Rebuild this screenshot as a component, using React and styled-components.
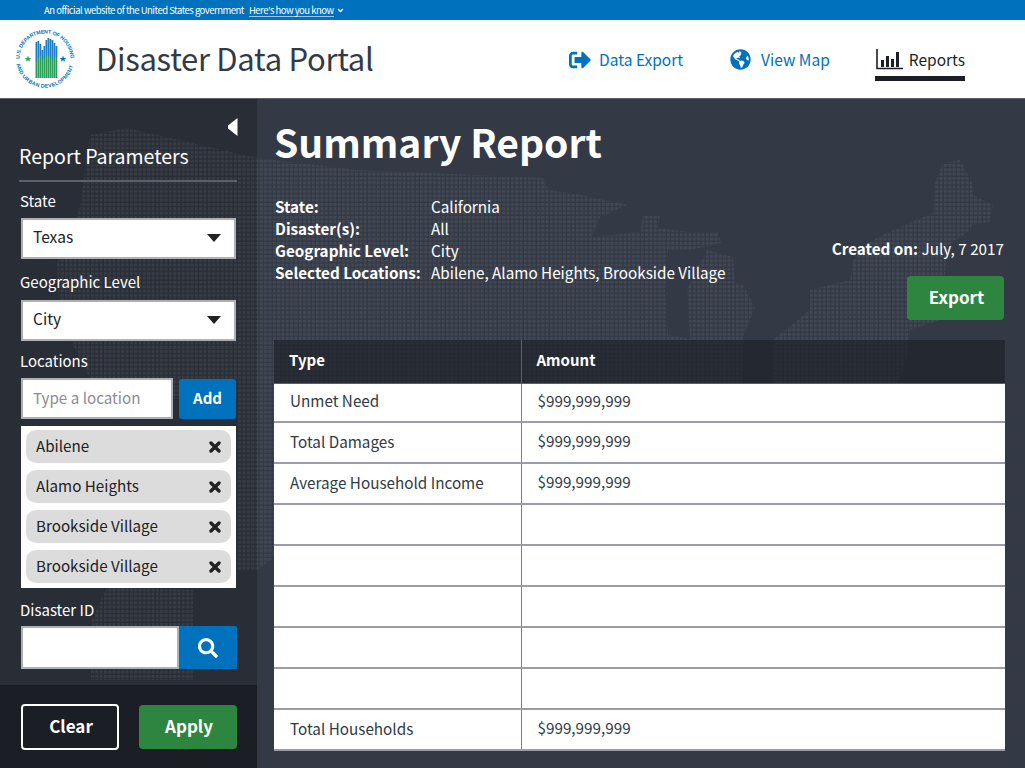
import React from 'react';
import styled, { createGlobalStyle } from 'styled-components';
import { FaAngleDown, FaGlobeAmericas, FaSearch, FaSignOutAlt } from 'react-icons/fa';

const GlobalStyle = createGlobalStyle`
  html, body {
    margin: 0;
    padding: 0;
    background: #333a46;
  }
  * {
    box-sizing: border-box;
  }
`;

const Page = styled.div`
  width: 1025px;
  height: 768px;
  display: flex;
  flex-direction: column;
  overflow: hidden;
  font-family: "Noto Sans CJK SC", "Noto Sans", sans-serif;
`;

const Banner = styled.div`
  height: 20px;
  display: flex;
  align-items: center;
  padding-left: 44px;
  background: #0071bc;
  color: #fff;
  font-size: 9.5px;
  letter-spacing: -0.5px;
  line-height: 14px;
  white-space: nowrap;
`;

const BannerLink = styled.span`
  margin-left: 5px;
  border-bottom: 1px solid #9cc8e6;
  line-height: 12px;
`;

const BannerChevron = styled(FaAngleDown)`
  margin-left: 2px;
  width: 9px;
  height: 9px;
`;

const Header = styled.header`
  height: 79px;
  display: flex;
  align-items: center;
  padding-left: 15px;
  background: #fff;
  border-bottom: 1px solid #5b616b;
`;

const SiteTitle = styled.h1`
  margin: 0 0 2px 21px;
  font-size: 31px;
  line-height: 44px;
  font-weight: 400;
  color: #323a45;
  letter-spacing: -0.3px;
  white-space: nowrap;
`;

const Nav = styled.nav`
  margin-left: auto;
  margin-right: 60px;
  display: flex;
  align-items: flex-start;
  gap: 45px;
  height: 44px;
  padding-top: 1px;
`;

const NavItem = styled.a`
  display: flex;
  align-items: center;
  gap: ${(p) => p.$gap}px;
  height: 43px;
  margin-right: ${(p) => p.$after || 0}px;
  padding: 5px 0 0 1px;
  font-size: 15.5px;
  line-height: 33px;
  color: ${(p) => (p.$active ? '#1b1f25' : '#0071bc')};
  border-bottom: 5px solid ${(p) => (p.$active ? '#1b1f25' : 'transparent')};
`;

const Body = styled.div`
  position: relative;
  flex: 1;
  display: flex;
  background: linear-gradient(to right, #282d36 257px, #333a46 257px);
`;

const DotMap = styled.svg`
  position: absolute;
  left: 0;
  top: 0;
  width: 1025px;
  height: 669px;
`;

const Sidebar = styled.aside`
  position: relative;
  width: 257px;
  display: flex;
  flex-direction: column;
  color: #fff;
`;

const SidebarForm = styled.div`
  flex: 1;
  padding: 19px 20px 0 21px;
  display: flex;
  flex-direction: column;
`;

const CollapseButton = styled.div`
  align-self: flex-end;
  height: 18px;
  margin-right: -1px;
  display: flex;
`;

const PanelTitle = styled.h2`
  margin: 4px 0 0 -2px;
  padding-bottom: 8px;
  font-size: 19.5px;
  line-height: 32px;
  font-weight: 400;
  border-bottom: 2px solid #5b616b;
  white-space: nowrap;
`;

const FieldLabel = styled.label`
  display: block;
  margin: ${(p) => p.$top}px 0 ${(p) => p.$bottom}px -1px;
  font-size: 15px;
  line-height: 22px;
`;

const SelectBox = styled.div`
  width: 215px;
  height: 41px;
  display: flex;
  align-items: center;
  justify-content: space-between;
  padding: 0 13px 5px 10px;
  background: #fff;
  border: 2px solid #aeb0b5;
  color: #212121;
  font-size: 15.5px;
`;

const Caret = styled.span`
  width: 0;
  height: 0;
  margin-top: 3px;
  border-left: 7.5px solid transparent;
  border-right: 7.5px solid transparent;
  border-top: 8px solid #212121;
`;

const InputRow = styled.div`
  width: 215px;
  display: flex;
  justify-content: space-between;
`;

const TextBox = styled.div`
  width: 152px;
  height: 41px;
  display: flex;
  align-items: center;
  padding: 0 0 3px 10px;
  background: #fff;
  border: 2px solid #aeb0b5;
  color: #8a8d93;
  font-size: 15.2px;
`;

const AddButton = styled.button`
  width: 57px;
  height: 40px;
  margin-top: 1px;
  padding: 0 0 4px;
  background: #0071bc;
  border: 0;
  border-radius: 3px;
  color: #fff;
  font: 700 15px "Noto Sans CJK SC", sans-serif;
`;

const ChipList = styled.div`
  width: 215px;
  margin-top: 7px;
  height: 162px;
  padding: 4px 5px;
  display: flex;
  flex-direction: column;
  gap: 7px;
  background: #fff;
`;

const Chip = styled.div`
  height: 33px;
  display: flex;
  align-items: center;
  justify-content: space-between;
  padding: 0 10px 3px;
  background: #dcdcdc;
  border-radius: 10px;
  color: #212121;
  font-size: 15.2px;
`;

const CloseGlyph = styled.svg`
  width: 12px;
  height: 12px;
  margin-top: 3px;
`;

const SearchRow = styled.div`
  display: flex;
  height: 43px;
  width: 216px;
`;

const SearchInput = styled.div`
  flex: 1;
  background: #fff;
  border: 2px solid #aeb0b5;
`;

const SearchButton = styled.button`
  width: 58px;
  padding: 0;
  display: flex;
  align-items: center;
  justify-content: center;
  background: #0071bc;
  border: 0;
  border-radius: 0 2px 2px 0;
  color: #fff;
`;

const SidebarFooter = styled.div`
  height: 83px;
  display: flex;
  gap: 20px;
  padding: 19px 20px 0 21px;
  background: #1b1f25;
`;

const Button = styled.button`
  width: ${(p) => p.$width}px;
  height: ${(p) => p.$height}px;
  margin-top: ${(p) => p.$top || 0}px;
  padding: 0 0 3px 2px;
  background: ${(p) => (p.$outline ? 'transparent' : '#2e8540')};
  border: ${(p) => (p.$outline ? '2px solid #fff' : '0')};
  border-radius: 4px;
  color: #fff;
  font: 700 17px "Noto Sans CJK SC", sans-serif;
`;

const Main = styled.main`
  position: relative;
  flex: 1;
  padding: 16px 20px 0 17px;
  color: #fff;
`;

const ReportTop = styled.div`
  display: flex;
  justify-content: space-between;
  height: 225px;
  padding-right: 1px;
`;

const ReportTitle = styled.h2`
  margin: 0;
  font-size: 39px;
  line-height: 52px;
  font-weight: 700;
  white-space: nowrap;
`;

const MetaList = styled.dl`
  margin: 28px 0 0 1px;
  display: grid;
  grid-template-columns: 156px auto;
  grid-auto-rows: 22px;
  font-size: 15.25px;
  line-height: 22px;
`;

const MetaKey = styled.dt`
  font-weight: 700;
  white-space: nowrap;
`;

const MetaValue = styled.dd`
  margin: 0;
  white-space: nowrap;
`;

const ReportSide = styled.div`
  display: flex;
  flex-direction: column;
  align-items: flex-end;
  padding-top: 122px;
`;

const CreatedOn = styled.div`
  font-size: 15.25px;
  line-height: 22px;
  white-space: nowrap;
  b {
    font-weight: 700;
  }
`;

const Table = styled.table`
  width: 731px;
  border-collapse: collapse;
  table-layout: fixed;
`;

const HeadCell = styled.th`
  height: 43px;
  padding: 0 0 3px 15px;
  text-align: left;
  font-size: 15px;
  font-weight: 700;
  background: rgba(27, 31, 37, 0.62);
  border-right: ${(p) => (p.$first ? '1px solid #5b616b' : '0')};
  border-bottom: 1px solid #5b616b;
`;

const Row = styled.tr`
  background: #fff;
  height: ${(p) => p.$height}px;
`;

const Cell = styled.td`
  padding: 0 0 ${(p) => (p.$first ? 4 : 5)}px 16px;
  font-size: 15.25px;
  line-height: 22px;
  color: #323a45;
  border-right: ${(p) => (p.$first ? '1px solid #7d818a' : '0')};
  border-bottom: 2px solid #9a9da5;
`;

const MAP_OUTLINE = `
  M57 164 L80 108 L90 36 L127 29 L257 59 L358 71 L543 79 L548 91 L572 94 L628 106 L600 118 L592 138 L640 133
  L643 117 L660 116 L657 129 L689 133 L718 133 L721 144 L690 151 L668 151 L665 190 L668 236 L690 240 L687 190
  L707 151 L733 158 L735 184 L743 185 L755 208 L743 238 L742 284
  L773 284 L773 241 L810 211 L810 191 L850 181 L853 161 L867 144 L900 128 L933 114 L935 84 L943 64 L960 61
  L972 84 L973 96 L993 106 L990 123 L972 126 L970 131 L947 148 L945 174 L940 221 L910 231 L908 251 L902 274
  L897 284 L860 400 L300 440 L257 471 L238 471 L238 300 L100 300 L60 220 Z
  M107 488 L193 491 L193 581 L90 581 L92 521 Z
`;

const rows = [
  ['Unmet Need', '$999,999,999', 39],
  ['Total Damages', '$999,999,999', 41],
  ['Average Household Income', '$999,999,999', 41],
  ['', '', 41],
  ['', '', 41],
  ['', '', 41],
  ['', '', 41],
  ['', '', 41],
  ['Total Households', '$999,999,999', 41],
];

const locations = ['Abilene', 'Alamo Heights', 'Brookside Village', 'Brookside Village'];

const meta = [
  ['State:', 'California'],
  ['Disaster(s):', 'All'],
  ['Geographic Level:', 'City'],
  ['Selected Locations:', 'Abilene, Alamo Heights, Brookside Village'],
];

const Seal = () => {
  const green = [64, 60, 58, 62, 60, 58, 58, 60, 62, 59, 60];
  const blue = [44, 43, 46, 52, 48, 42, 40, 41, 42, 45, 48];
  return (
    <svg width="60" height="60" viewBox="15 31 60 60">
      <defs>
        <path id="sealTop" d="M19.5 61 A25.5 25.5 0 0 1 70.5 61" />
        <path id="sealBottom" d="M16.5 66 A29 29 0 0 0 73.5 66" />
      </defs>
      <text fontSize="5.2" fontWeight="700" fill="#0071bc" fontFamily="Liberation Sans, sans-serif">
        <textPath href="#sealTop" textLength="79">U.S. DEPARTMENT OF HOUSING</textPath>
      </text>
      <text fontSize="5.2" fontWeight="700" fill="#0071bc" fontFamily="Liberation Sans, sans-serif">
        <textPath href="#sealBottom" textLength="78">AND URBAN DEVELOPMENT</textPath>
      </text>
      {blue.map((top, i) => (
        <rect key={`b${i}`} x={35.5 + i * 2} y={top} width="1.8" height={green[i] - top} fill="#1f7fc6" />
      ))}
      {green.map((top, i) => (
        <rect key={`g${i}`} x={35.5 + i * 2} y={top} width="1.8" height={80 - top} fill="#2f9e5b" />
      ))}
      <path d="M28 57.5l.9 2.4h2.5l-2 1.5.8 2.4-2.2-1.5-2.2 1.5.8-2.4-2-1.5h2.5z" fill="#2f9e5b" />
      <path d="M63 57.5l.9 2.4h2.5l-2 1.5.8 2.4-2.2-1.5-2.2 1.5.8-2.4-2-1.5h2.5z" fill="#0071bc" />
    </svg>
  );
};

const BarsIcon = () => (
  <svg width="27" height="21" viewBox="0 0 27 21">
    <path d="M1 0v19.5h26" fill="none" stroke="#1b1f25" strokeWidth="1.6" />
    <path d="M5 11h3v7H5zM10 7h3v11h-3zM15 10h3v8h-3zM20 3h3v15h-3z" fill="#1b1f25" />
  </svg>
);

const CloseIcon = () => (
  <CloseGlyph viewBox="0 0 12 12">
    <path d="M2 2L10 10M10 2L2 10" fill="none" stroke="#212121" strokeWidth="3.4" strokeLinecap="round" />
  </CloseGlyph>
);

const App = () => (
  <Page>
    <GlobalStyle />
    <Banner>
      An official website of the United States government
      <BannerLink>Here's how you know</BannerLink>
      <BannerChevron />
    </Banner>
    <Header>
      <Seal />
      <SiteTitle>Disaster Data Portal</SiteTitle>
      <Nav>
        <NavItem $gap={8} $after={1}>
          <FaSignOutAlt size={22} />
          Data Export
        </NavItem>
        <NavItem $gap={10}>
          <FaGlobeAmericas size={21} />
          View Map
        </NavItem>
        <NavItem $active $gap={6}>
          <BarsIcon />
          Reports
        </NavItem>
      </Nav>
    </Header>
    <Body>
      <DotMap viewBox="0 0 1025 669">
        <defs>
          <pattern id="dots" width="4.33" height="4.33" patternUnits="userSpaceOnUse">
            <rect width="3" height="3" fill="#fff" fillOpacity="0.07" />
          </pattern>
        </defs>
        <path d={MAP_OUTLINE} fill="url(#dots)" />
      </DotMap>
      <Sidebar>
        <SidebarForm>
          <CollapseButton>
            <svg width="11" height="18" viewBox="0 0 11 18">
              <path d="M10.5 0v18L1 10.5V7.5z" fill="#fff" />
            </svg>
          </CollapseButton>
          <PanelTitle>Report Parameters</PanelTitle>
          <FieldLabel $top={8} $bottom={6}>State</FieldLabel>
          <SelectBox>
            Texas
            <Caret />
          </SelectBox>
          <FieldLabel $top={12} $bottom={7}>Geographic Level</FieldLabel>
          <SelectBox>
            City
            <Caret />
          </SelectBox>
          <FieldLabel $top={9} $bottom={6}>Locations</FieldLabel>
          <InputRow>
            <TextBox>Type a location</TextBox>
            <AddButton>Add</AddButton>
          </InputRow>
          <ChipList>
            {locations.map((name, i) => (
              <Chip key={i}>
                {name}
                <CloseIcon />
              </Chip>
            ))}
          </ChipList>
          <FieldLabel $top={11} $bottom={5}>Disaster ID</FieldLabel>
          <SearchRow>
            <SearchInput />
            <SearchButton>
              <FaSearch size={20} />
            </SearchButton>
          </SearchRow>
        </SidebarForm>
        <SidebarFooter>
          <Button $outline $width={98} $height={46}>Clear</Button>
          <Button $width={98} $height={44} $top={1}>Apply</Button>
        </SidebarFooter>
      </Sidebar>
      <Main>
        <ReportTop>
          <div>
            <ReportTitle>Summary Report</ReportTitle>
            <MetaList>
              {meta.map(([key, value]) => (
                <React.Fragment key={key}>
                  <MetaKey>{key}</MetaKey>
                  <MetaValue>{value}</MetaValue>
                </React.Fragment>
              ))}
            </MetaList>
          </div>
          <ReportSide>
            <CreatedOn>
              <b>Created on:</b> July, 7 2017
            </CreatedOn>
            <Button $width={97} $height={44} $top={17}>Export</Button>
          </ReportSide>
        </ReportTop>
        <Table>
          <colgroup>
            <col width="247" />
            <col />
          </colgroup>
          <thead>
            <tr>
              <HeadCell $first>Type</HeadCell>
              <HeadCell>Amount</HeadCell>
            </tr>
          </thead>
          <tbody>
            {rows.map(([type, amount, height], i) => (
              <Row key={i} $height={height}>
                <Cell $first>{type}</Cell>
                <Cell>{amount}</Cell>
              </Row>
            ))}
          </tbody>
        </Table>
      </Main>
    </Body>
  </Page>
);

export default App;
